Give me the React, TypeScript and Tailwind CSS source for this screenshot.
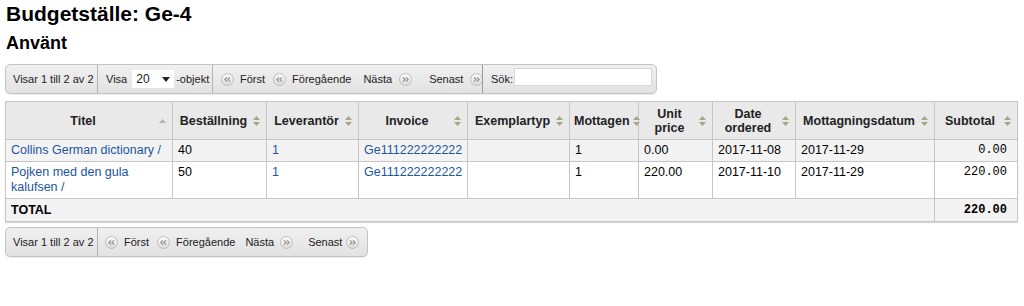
import React from "react";

type Row = {
  title: string;
  order: string;
  vendor: string;
  invoice: string;
  itemType: string;
  received: string;
  unitPrice: string;
  dateOrdered: string;
  dateReceived: string;
  subtotal: string;
};

const rows: Row[] = [
  {
    title: "Collins German dictionary /",
    order: "40",
    vendor: "1",
    invoice: "Ge111222222222",
    itemType: "",
    received: "1",
    unitPrice: "0.00",
    dateOrdered: "2017-11-08",
    dateReceived: "2017-11-29",
    subtotal: "0.00",
  },
  {
    title: "Pojken med den gula kalufsen /",
    order: "50",
    vendor: "1",
    invoice: "Ge111222222222",
    itemType: "",
    received: "1",
    unitPrice: "220.00",
    dateOrdered: "2017-11-10",
    dateReceived: "2017-11-29",
    subtotal: "220.00",
  },
];

const columns = [
  { label: "Titel", width: "w-[167px]", asc: true },
  { label: "Beställning", width: "w-[94px]" },
  { label: "Leverantör", width: "w-[92px]" },
  { label: "Invoice", width: "w-[109px]" },
  { label: "Exemplartyp", width: "w-[102px]" },
  { label: "Mottagen", width: "w-[69px]" },
  { label: "Unit price", width: "w-[74px]" },
  { label: "Date ordered", width: "w-[83px]" },
  { label: "Mottagningsdatum", width: "w-[139px]" },
  { label: "Subtotal", width: "w-[83px]" },
];

const SortIcon = ({ asc }: { asc?: boolean }) =>
  asc ? (
    <svg width="7" height="10" viewBox="0 0 7 10" className="shrink-0">
      <polygon points="3.5,3 7,7 0,7" fill="#b4b4b4" />
    </svg>
  ) : (
    <svg width="7" height="10" viewBox="0 0 7 10" className="shrink-0">
      <polygon points="3.5,0 7,4 0,4" fill="#a3a882" />
      <polygon points="0,6 7,6 3.5,10" fill="#a3a882" />
    </svg>
  );

const PageIcon = ({ dir }: { dir: "left" | "right" }) => (
  <svg width="13" height="13" viewBox="0 0 13 13" className="shrink-0">
    <defs>
      <linearGradient id={`pg-${dir}`} x1="0" y1="0" x2="0" y2="1">
        <stop offset="0" stopColor="#fdfdfd" />
        <stop offset="1" stopColor="#d9d9d9" />
      </linearGradient>
    </defs>
    <circle cx="6.5" cy="6.5" r="6" fill={`url(#pg-${dir})`} stroke="#bdbdbd" />
    {dir === "left" ? (
      <g fill="none" stroke="#8e8e8e" strokeWidth="1.1">
        <polyline points="6,4.3 3.8,6.5 6,8.7" />
        <polyline points="9,4.3 6.8,6.5 9,8.7" />
      </g>
    ) : (
      <g fill="none" stroke="#8e8e8e" strokeWidth="1.1">
        <polyline points="4,4.3 6.2,6.5 4,8.7" />
        <polyline points="7,4.3 9.2,6.5 7,8.7" />
      </g>
    )}
  </svg>
);

const Pager = ({ bottom }: { bottom?: boolean }) => (
  <div className="flex items-center">
    <PageIcon dir="left" />
    <span className="ml-[6px]">Först</span>
    <span className="ml-[8px]">
      <PageIcon dir="left" />
    </span>
    <span className="ml-[6px]">Föregående</span>
    <span className={bottom ? "ml-[10px]" : "ml-[12px]"}>Nästa</span>
    <span className={bottom ? "ml-[6px]" : "ml-[7px]"}>
      <PageIcon dir="right" />
    </span>
    <span className={bottom ? "ml-[15px]" : "ml-[17px]"}>Senast</span>
    <span className={bottom ? "ml-[4px]" : "ml-[7px]"}>
      <PageIcon dir="right" />
    </span>
  </div>
);

const Toolbar = ({ full }: { full?: boolean }) => (
  <div
    className={`flex h-[30px] items-stretch rounded-[5px] border border-[#c4c4c4] bg-gradient-to-b from-[#f0f0f0] to-[#e2e2e2] text-[11px] text-[#222] shadow-[0_1px_1px_rgba(0,0,0,0.08)] ${
      full ? "w-[652px]" : "w-[363px]"
    }`}
  >
    <div className="flex w-[91px] items-center pl-[7px]">Visar 1 till 2 av 2</div>
    {full && (
      <div className="flex w-[115px] items-center border-l border-[#b4b4b4] pl-[8px]">
        <span>Visa</span>
        <div className="ml-[5px] flex h-[18px] w-[42px] items-center justify-between bg-white pl-[4px] pr-[4px] text-[12px]">
          <span>20</span>
          <svg width="8" height="5" viewBox="0 0 8 5">
            <polygon points="0,0 8,0 4,5" fill="#222" />
          </svg>
        </div>
        <span className="ml-[2px]">-objekt</span>
      </div>
    )}
    <div
      className={`flex items-center border-l border-[#b4b4b4] ${
        full ? "w-[270px] pl-[8px]" : "flex-1 pl-[7px]"
      }`}
    >
      <Pager bottom={!full} />
    </div>
    {full && (
      <div className="flex flex-1 items-center border-l border-[#9c9c9c] pl-[8px]">
        <span>Sök:</span>
        <div className="ml-[1px] h-[18px] w-[138px] -translate-y-[2px] border border-[#d8d8d8] bg-white" />
      </div>
    )}
  </div>
);

const Link = ({ children }: { children: React.ReactNode }) => (
  <a href="#" className="text-[#1d55a0]">
    {children}
  </a>
);

export default function App() {
  const td = "border border-[#c6c6c6] px-[5px] pt-[3px] pb-[3px] align-top leading-[15px]";
  const mono = { fontFamily: '"Liberation Mono", "Courier New", monospace' };
  return (
    <div
      className="min-h-screen bg-white px-[5px] text-[#000]"
      style={{ fontFamily: '"Liberation Sans", Arial, sans-serif' }}
    >
      <h1 className="pt-[2px] pl-[1px] text-[21px] font-bold leading-6">Budgetställe: Ge-4</h1>
      <h2 className="mt-[6px] pl-[1px] text-[18px] font-bold leading-[22px]">Använt</h2>

      <div className="mt-[10px]">
        <Toolbar full />
      </div>

      <table className="mt-[7px] w-[1012px] table-fixed border-collapse text-[12.5px] shadow-[0_1px_1px_rgba(0,0,0,0.15)]">
        <colgroup>
          {columns.map((c) => (
            <col key={c.label} className={c.width} />
          ))}
        </colgroup>
        <thead>
          <tr className="h-[38px] bg-[#e9e9e9]">
            {columns.map((c) => (
              <th
                key={c.label}
                className="border border-[#c6c6c6] pl-[4px] pr-[6px] font-bold leading-[14px] text-[#222]"
              >
                <div className="flex items-center gap-[3px]">
                  <span className="flex-1 text-center">{c.label}</span>
                  <SortIcon asc={c.asc} />
                </div>
              </th>
            ))}
          </tr>
        </thead>
        <tbody>
          {rows.map((r, i) => (
            <tr key={i} className={i % 2 === 0 ? "bg-[#f3f3f3]" : "bg-white"}>
              <td className={td}>
                <Link>{r.title}</Link>
              </td>
              <td className={td}>{r.order}</td>
              <td className={td}>
                <Link>{r.vendor}</Link>
              </td>
              <td className={td}>
                <Link>{r.invoice}</Link>
              </td>
              <td className={td}>{r.itemType}</td>
              <td className={td}>{r.received}</td>
              <td className={td}>{r.unitPrice}</td>
              <td className={td}>{r.dateOrdered}</td>
              <td className={td}>{r.dateReceived}</td>
              <td className={`${td} pr-[10px] text-right text-[12px]`} style={mono}>
                {r.subtotal}
              </td>
            </tr>
          ))}
          <tr className="h-[23px] bg-[#f3f3f3]">
            <td colSpan={9} className="border border-[#c6c6c6] px-[5px] font-bold">
              TOTAL
            </td>
            <td className="border border-[#c6c6c6] pr-[10px] text-right text-[12px] font-bold" style={mono}>
              220.00
            </td>
          </tr>
        </tbody>
      </table>

      <div className="mt-[5px]">
        <Toolbar />
      </div>
    </div>
  );
}
